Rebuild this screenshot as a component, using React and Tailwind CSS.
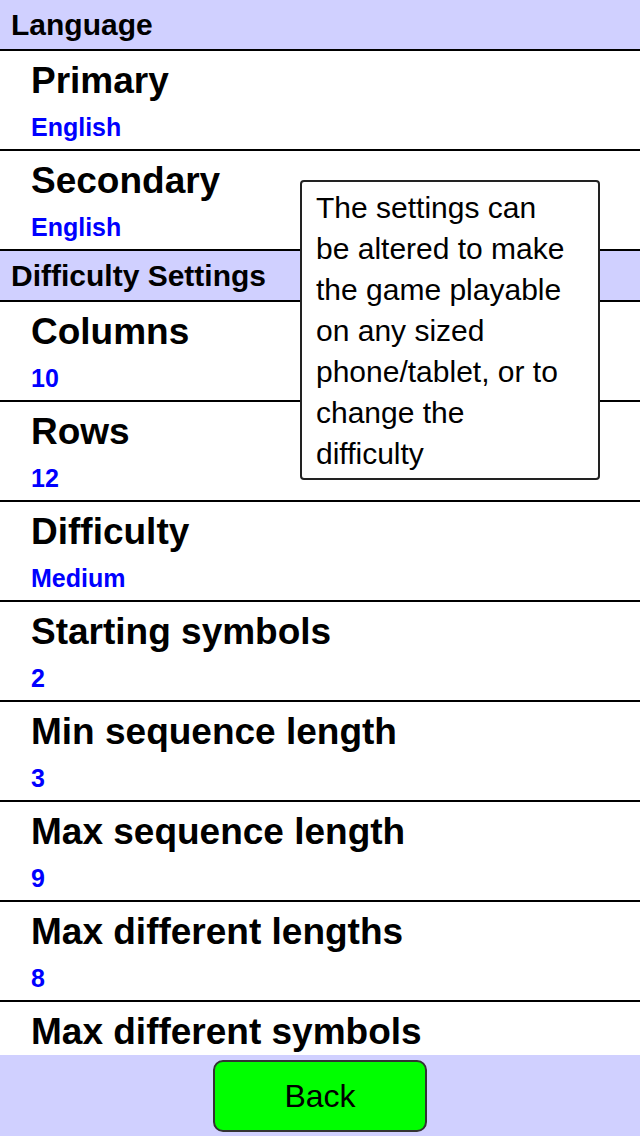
// App.jsx
const sections = [
  {
    title: 'Language',
    items: [
      { label: 'Primary', value: 'English' },
      { label: 'Secondary', value: 'English' }
    ]
  },
  {
    title: 'Difficulty Settings',
    items: [
      { label: 'Columns', value: '10' },
      { label: 'Rows', value: '12' },
      { label: 'Difficulty', value: 'Medium' },
      { label: 'Starting symbols', value: '2' },
      { label: 'Min sequence length', value: '3' },
      { label: 'Max sequence length', value: '9' },
      { label: 'Max different lengths', value: '8' },
      { label: 'Max different symbols', value: '6' }
    ]
  }
];

const SectionHeader = ({ title }) => (
  <div className="h-[51px] shrink-0 bg-[#d0d0ff] border-b-2 border-black pl-[11px] pt-[7px]">
    <h2 className="text-[30px] leading-[36px] font-bold text-black">{title}</h2>
  </div>
);

const SettingRow = ({ label, value }) => (
  <div className="h-[100px] shrink-0 bg-white border-b-2 border-black pl-[31px] pt-[10px]">
    <div className="text-[37px] leading-[40px] font-bold text-black">{label}</div>
    <div className="mt-[11px] text-[25px] leading-[30px] font-bold text-[#0000ff]">{value}</div>
  </div>
);

const App = () => {
  return (
    <div
      className="relative w-[640px] h-[1136px] flex flex-col bg-white overflow-hidden"
      style={{ fontFamily: '"Liberation Sans", Arial, sans-serif' }}
    >
      <div className="flex-1 flex flex-col overflow-hidden">
        {sections.map((section) => (
          <div key={section.title} className="flex flex-col">
            <SectionHeader title={section.title} />
            {section.items.map((item) => (
              <SettingRow key={item.label} label={item.label} value={item.value} />
            ))}
          </div>
        ))}
      </div>

      <div className="h-[81px] shrink-0 bg-[#d0d0ff] flex justify-center pt-[5px]">
        <button className="w-[214px] h-[72px] rounded-[10px] border-2 border-[#333] bg-[#00ff00] flex items-center justify-center text-[32px] text-black">
          Back
        </button>
      </div>

      {/* info popup over the list */}
      <div className="absolute left-[300px] top-[180px] w-[300px] h-[300px] bg-white border-2 border-[#222] rounded-[4px] pl-[14px] pr-[28px] pt-[5px]">
        <p className="text-[30px] leading-[41px] text-black">
          The settings can be altered to make the game playable on any sized phone/tablet, or to change the difficulty
        </p>
      </div>
    </div>
  );
};

export default App;
